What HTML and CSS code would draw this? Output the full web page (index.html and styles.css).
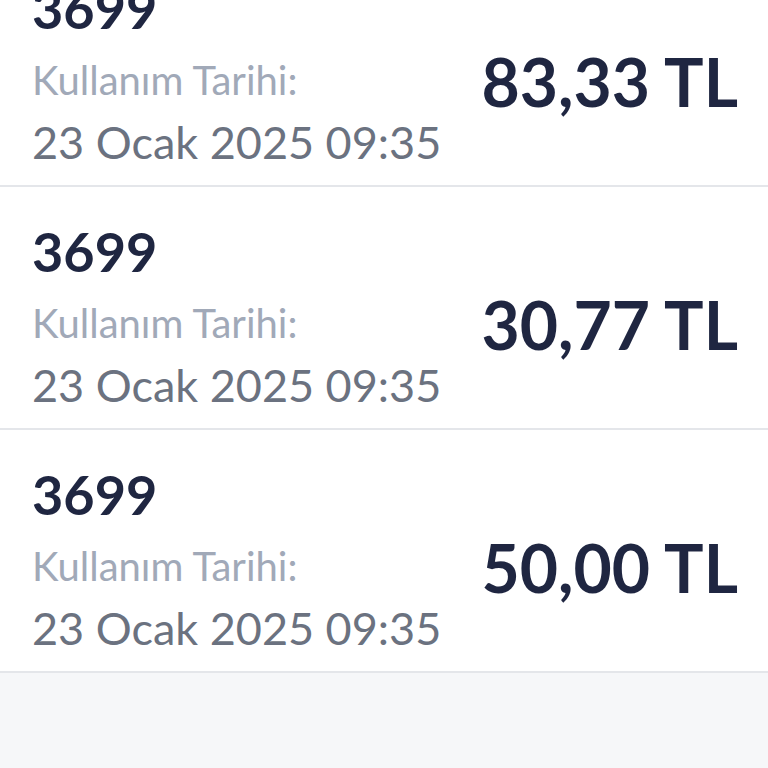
FILE: index.html
```html
<!DOCTYPE html>
<html lang="tr">
<head>
<meta charset="utf-8">
<link rel="stylesheet" href="styles.css">
</head>
<body>
<div class="list">
  <div class="item">
    <div class="info">
      <div class="code">3699</div>
      <div class="label">Kullanım Tarihi:</div>
      <div class="date">23 Ocak 2025 09:35</div>
    </div>
    <div class="amount">83,33 TL</div>
  </div>
  <div class="item">
    <div class="info">
      <div class="code">3699</div>
      <div class="label">Kullanım Tarihi:</div>
      <div class="date">23 Ocak 2025 09:35</div>
    </div>
    <div class="amount">30,77 TL</div>
  </div>
  <div class="item">
    <div class="info">
      <div class="code">3699</div>
      <div class="label">Kullanım Tarihi:</div>
      <div class="date">23 Ocak 2025 09:35</div>
    </div>
    <div class="amount">50,00 TL</div>
  </div>
</div>
</body>
</html>
```
FILE: styles.css
```css
html, body {
  margin: 0;
  padding: 0;
  background: #f6f7f9;
  font-family: "Lato", "Noto Sans", sans-serif;
  height: 768px;
  overflow: hidden;
}
.list {
  margin-top: -56px;
  background: #ffffff;
}
.item {
  display: flex;
  justify-content: space-between;
  align-items: center;
  padding: 29px 30px 16px 32px;
  border-bottom: 2px solid #e4e6ea;
}
.info {
  display: flex;
  flex-direction: column;
}
.code {
  font-size: 54px;
  font-weight: 700;
  color: #1f2641;
  line-height: 72px;
}
.label {
  font-size: 40px;
  font-weight: 400;
  color: #a1a9b8;
  line-height: 70px;
}
.date {
  font-size: 45px;
  font-weight: 400;
  color: #6b7280;
  line-height: 54px;
}
.amount {
  font-size: 66px;
  font-weight: 700;
  color: #1f2641;
  line-height: 1;
  margin-top: 21px;
}
```
